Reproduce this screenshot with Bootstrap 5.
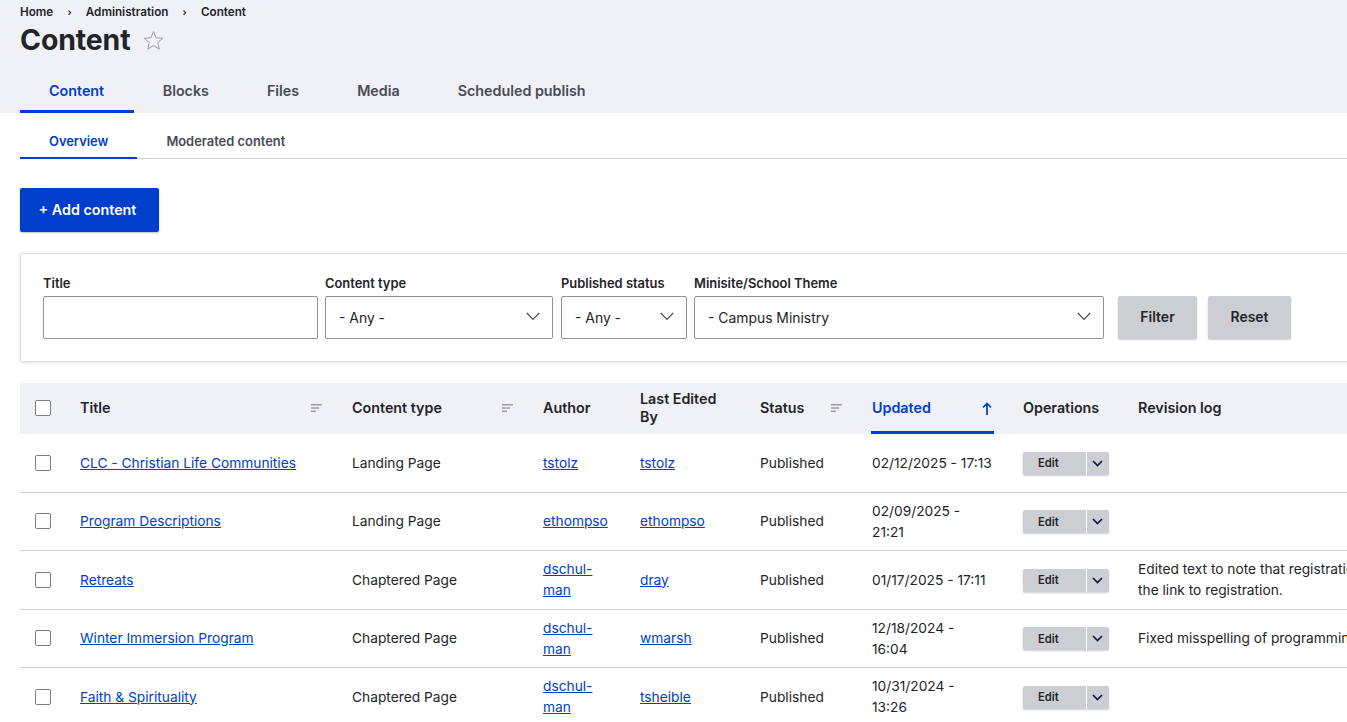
<!DOCTYPE html>
<html lang="en">
<head>
<meta charset="utf-8">
<title>Content</title>
<link href="https://cdn.jsdelivr.net/npm/bootstrap@5.3.0/dist/css/bootstrap.min.css" rel="stylesheet">
<style>
html, body { overflow: hidden; height: 722px; }
body { font-family: Inter, "Liberation Sans", sans-serif; font-size: 14px; line-height: 21px; color: #232429; background: #fff; -webkit-font-smoothing: antialiased; }
a { color: #003ecc; }
.page-head { background: #f0f1f6; padding: 0 20px; height: 113px; }
.crumbs { padding-top: 3px; height: 21px; font-size: 11.7px; line-height: 18px; font-weight: 600; margin: 0; }
.crumbs .breadcrumb-item { padding: 0; }
.crumbs .breadcrumb-item::before { display: none; }
.crumbs a { color: #232429; text-decoration: none; }
.crumbs .sep { width: 32.5px; text-align: center; font-size: 10px; }
.title-row { height: 36px; margin-top: 1px; }
.title-row h1 { font-size: 28.4px; line-height: 36px; font-weight: 700; margin: 0; letter-spacing: -.1px; }
.star { margin-left: 12px; margin-top: 1px; }
.tabs1 { margin-top: 12px; height: 43px; }
.tabs1 .nav-link { color: #484b55; font-weight: 600; font-size: 14.3px; line-height: 21px; padding: 10px 29px 9px; margin-right: 0; border: 0; border-bottom: 3px solid transparent; height: 43px; border-radius: 0; background: none; }
.tabs1 .nav-link.active { color: #003ecc; border-bottom-color: #003ecc; padding-right: 29.6px; }
.tabs2 { margin: 0 0 0 20px; height: 46px; border-bottom: 1px solid #cfd0d6; }
.tabs2 .nav-link { color: #484b55; font-weight: 600; font-size: 12.9px; line-height: 18px; padding: 19.6px 29px 6.4px; height: 46px; border: 0; border-bottom: 2px solid transparent; border-radius: 0; background: none; margin-bottom: -1px; }
.tabs2 .nav-link.active { color: #003ecc; border-bottom-color: #003ecc; }
.content { padding: 29px 20px 0; width: 1700px; }
.btn-add { background: #003ecc; color: #fff; font-weight: 600; font-size: 14.3px; height: 44px; width: 139px; padding: 0 4px 1px 0; border: 0; border-radius: 2px; box-shadow: 0 1px 2px rgba(0,0,0,.25); }
.btn-add:hover { background: #003ecc; color: #fff; }
.filters { margin-top: 21px; height: 109px; padding: 20.6px 22px 0; border: 1px solid #dedfe3; border-radius: 2px; box-shadow: 0 1px 4px rgba(0,0,0,.12); background: #fff; }
.filters label { display: block; font-size: 12.9px; line-height: 18px; font-weight: 600; margin-bottom: 3.4px; height: 18px; white-space: nowrap; }
.filters .form-control, .filters .form-select { height: 43px; border: 1px solid #8e929c; border-radius: 2px; font-size: 13.9px; line-height: 21px; color: #232429; padding: 2px 13px 0; background-image: none; box-shadow: none; }
.select-wrap { position: relative; }
.select-wrap svg { position: absolute; right: 13px; top: 16px; pointer-events: none; }
.f-title { width: 275px; margin-right: 7px; }
.f-type { width: 228px; margin-right: 8px; }
.f-pub { width: 126px; margin-right: 7px; }
.f-min { width: 410px; margin-right: 14px; }
.btn-grey { background: #cdced4; color: #232429; font-weight: 600; font-size: 14px; height: 43px; padding: 0 0 2px; border: 0; border-radius: 2px; box-shadow: 0 1px 2px rgba(0,0,0,.2); }
.btn-grey:hover { background: #cdced4; color: #232429; }
.btn-filter { width: 79px; margin-right: 11px; margin-top: 21.4px; }
.btn-reset { width: 83px; margin-top: 21.4px; }
.grid { margin-top: 21px; width: 1606px; table-layout: fixed; margin-bottom: 0; color: #232429; --bs-table-border-color: #cfd0d6; }
.grid thead th { background: #f0f1f6; height: 50.5px; padding: 0 12px 1px 12px; font-weight: 600; font-size: 14.3px; line-height: 18px; vertical-align: middle; border-bottom: 0; color: #232429; box-shadow: none; }
.grid tbody td { height: 58.5px; padding: 5px 12px 4px; vertical-align: middle; line-height: 21px; font-size: 13.75px; color: #232429; box-shadow: none; }
.grid thead th.check, .grid tbody td.check { padding: 0 0 0 15px; }
.grid .form-check-input { width: 16px; height: 16px; margin: 0; border: 1px solid #7a7d87; border-radius: 2px; display: block; }
.sorter { padding-right: 6px; }
.grid thead th.sorted { padding: 0 17px 0 11px; }
.sorted-in { height: 50.5px; border-bottom: 3px solid #003ecc; color: #003ecc; padding: 3px 2px 0 1px; }
.ops { width: 86px; height: 23px; border-radius: 2px; background: #cdced4; box-shadow: 0 1px 2px rgba(0,0,0,.2); }
.ops .edit { width: 63px; font-size: 11.2px; font-weight: 600; line-height: 22px; text-align: left; padding: 0 0 0 15px; border: 0; border-radius: 2px 0 0 2px; background: none; color: #232429; }
.ops .tog { width: 23px; border: 0; border-left: 1px solid #fff; padding: 0; background: none; border-radius: 0 2px 2px 0; }
.log { white-space: nowrap; }
</style>
</head>
<body>
<header class="page-head">
  <ol class="breadcrumb crumbs align-items-center">
    <li class="breadcrumb-item"><a href="#">Home</a></li>
    <li class="sep" aria-hidden="true">›</li>
    <li class="breadcrumb-item"><a href="#">Administration</a></li>
    <li class="sep" aria-hidden="true">›</li>
    <li class="breadcrumb-item"><a href="#">Content</a></li>
  </ol>
  <div class="title-row d-flex align-items-center">
    <h1>Content</h1>
    <svg class="star" width="21" height="21" viewBox="0 0 21 21" fill="none" stroke="#9a9da8" stroke-width="1"><path d="M10.5 1.6l2.6 6.2 6.7.5-5.1 4.3 1.6 6.5-5.8-3.5-5.8 3.5 1.6-6.5-5.1-4.3 6.7-.5z"/></svg>
  </div>
  <ul class="nav tabs1">
    <li class="nav-item"><a class="nav-link active" href="#">Content</a></li>
    <li class="nav-item"><a class="nav-link" href="#">Blocks</a></li>
    <li class="nav-item"><a class="nav-link" href="#">Files</a></li>
    <li class="nav-item"><a class="nav-link" href="#">Media</a></li>
    <li class="nav-item"><a class="nav-link" href="#">Scheduled publish</a></li>
  </ul>
</header>
<ul class="nav tabs2">
  <li class="nav-item"><a class="nav-link active" href="#">Overview</a></li>
  <li class="nav-item"><a class="nav-link" href="#">Moderated content</a></li>
</ul>
<main class="content">
  <a class="btn btn-add d-inline-flex align-items-center justify-content-center" href="#">+ Add content</a>
  <form class="filters d-flex align-items-start">
    <div class="f-title"><label for="t">Title</label><input id="t" class="form-control" type="text"></div>
    <div class="f-type"><label for="c">Content type</label><div class="select-wrap"><select id="c" class="form-select"><option>- Any -</option></select><svg width="14" height="9" viewBox="0 0 14 9" fill="none" stroke="#4a4d57" stroke-width="1.2"><path d="M.8 1l6.2 6.4L13.2 1"/></svg></div></div>
    <div class="f-pub"><label for="p">Published status</label><div class="select-wrap"><select id="p" class="form-select"><option>- Any -</option></select><svg width="14" height="9" viewBox="0 0 14 9" fill="none" stroke="#4a4d57" stroke-width="1.2"><path d="M.8 1l6.2 6.4L13.2 1"/></svg></div></div>
    <div class="f-min"><label for="m">Minisite/School Theme</label><div class="select-wrap"><select id="m" class="form-select"><option>- Campus Ministry</option></select><svg width="14" height="9" viewBox="0 0 14 9" fill="none" stroke="#4a4d57" stroke-width="1.2"><path d="M.8 1l6.2 6.4L13.2 1"/></svg></div></div>
    <button type="button" class="btn btn-grey btn-filter">Filter</button>
    <button type="button" class="btn btn-grey btn-reset">Reset</button>
  </form>
  <table class="table grid">
    <colgroup><col style="width:48px"><col style="width:272px"><col style="width:191px"><col style="width:97px"><col style="width:120px"><col style="width:112px"><col style="width:151px"><col style="width:115px"><col style="width:500px"></colgroup>
    <thead>
      <tr>
        <th class="check"><input class="form-check-input" type="checkbox" aria-label="Select all"></th>
        <th><div class="sorter d-flex justify-content-between align-items-center">Title <svg width="11" height="8" viewBox="0 0 11 8" fill="#9a9da8"><path d="M0 0h11v1.6H0zM0 3.2h8v1.6H0zM0 6.4h5V8H0z"/></svg></div></th>
        <th><div class="sorter d-flex justify-content-between align-items-center">Content type <svg width="11" height="8" viewBox="0 0 11 8" fill="#9a9da8"><path d="M0 0h11v1.6H0zM0 3.2h8v1.6H0zM0 6.4h5V8H0z"/></svg></div></th>
        <th>Author</th>
        <th>Last Edited<br>By</th>
        <th><div class="sorter d-flex justify-content-between align-items-center">Status <svg width="11" height="8" viewBox="0 0 11 8" fill="#9a9da8"><path d="M0 0h11v1.6H0zM0 3.2h8v1.6H0zM0 6.4h5V8H0z"/></svg></div></th>
        <th class="sorted"><div class="sorted-in d-flex justify-content-between align-items-center">Updated <svg width="10" height="13" viewBox="0 0 10 13" fill="none" stroke="#003ecc" stroke-width="1.7"><path d="M5 13V1.5M1 5.5l4-4 4 4"/></svg></div></th>
        <th>Operations</th>
        <th>Revision log</th>
      </tr>
    </thead>
    <tbody>
      <tr>
        <td class="check"><input class="form-check-input" type="checkbox" aria-label="Select"></td>
        <td><a href="#">CLC - Christian Life Communities</a></td><td>Landing Page</td><td><a href="#">tstolz</a></td><td><a href="#">tstolz</a></td><td>Published</td><td>02/12/2025 - 17:13</td>
        <td><div class="ops btn-group"><button type="button" class="edit btn">Edit</button><button type="button" class="tog btn d-flex align-items-center justify-content-center" aria-label="More"><svg width="11" height="7" viewBox="0 0 11 7" fill="none" stroke="#0f1b3d" stroke-width="1.7"><path d="M1 1l4.5 4.5L10 1"/></svg></button></div></td>
        <td></td>
      </tr>
      <tr>
        <td class="check"><input class="form-check-input" type="checkbox" aria-label="Select"></td>
        <td><a href="#">Program Descriptions</a></td><td>Landing Page</td><td><a href="#">ethompso</a></td><td><a href="#">ethompso</a></td><td>Published</td><td>02/09/2025 -<br>21:21</td>
        <td><div class="ops btn-group"><button type="button" class="edit btn">Edit</button><button type="button" class="tog btn d-flex align-items-center justify-content-center" aria-label="More"><svg width="11" height="7" viewBox="0 0 11 7" fill="none" stroke="#0f1b3d" stroke-width="1.7"><path d="M1 1l4.5 4.5L10 1"/></svg></button></div></td>
        <td></td>
      </tr>
      <tr>
        <td class="check"><input class="form-check-input" type="checkbox" aria-label="Select"></td>
        <td><a href="#">Retreats</a></td><td>Chaptered Page</td><td><a href="#">dschul-<br>man</a></td><td><a href="#">dray</a></td><td>Published</td><td>01/17/2025 - 17:11</td>
        <td><div class="ops btn-group"><button type="button" class="edit btn">Edit</button><button type="button" class="tog btn d-flex align-items-center justify-content-center" aria-label="More"><svg width="11" height="7" viewBox="0 0 11 7" fill="none" stroke="#0f1b3d" stroke-width="1.7"><path d="M1 1l4.5 4.5L10 1"/></svg></button></div></td>
        <td class="log">Edited text to note that registration<br>the link to registration.</td>
      </tr>
      <tr>
        <td class="check"><input class="form-check-input" type="checkbox" aria-label="Select"></td>
        <td><a href="#">Winter Immersion Program</a></td><td>Chaptered Page</td><td><a href="#">dschul-<br>man</a></td><td><a href="#">wmarsh</a></td><td>Published</td><td>12/18/2024 -<br>16:04</td>
        <td><div class="ops btn-group"><button type="button" class="edit btn">Edit</button><button type="button" class="tog btn d-flex align-items-center justify-content-center" aria-label="More"><svg width="11" height="7" viewBox="0 0 11 7" fill="none" stroke="#0f1b3d" stroke-width="1.7"><path d="M1 1l4.5 4.5L10 1"/></svg></button></div></td>
        <td class="log">Fixed misspelling of programming</td>
      </tr>
      <tr>
        <td class="check"><input class="form-check-input" type="checkbox" aria-label="Select"></td>
        <td><a href="#">Faith &amp; Spirituality</a></td><td>Chaptered Page</td><td><a href="#">dschul-<br>man</a></td><td><a href="#">tsheible</a></td><td>Published</td><td>10/31/2024 -<br>13:26</td>
        <td><div class="ops btn-group"><button type="button" class="edit btn">Edit</button><button type="button" class="tog btn d-flex align-items-center justify-content-center" aria-label="More"><svg width="11" height="7" viewBox="0 0 11 7" fill="none" stroke="#0f1b3d" stroke-width="1.7"><path d="M1 1l4.5 4.5L10 1"/></svg></button></div></td>
        <td></td>
      </tr>
    </tbody>
  </table>
</main>
<script src="https://cdn.jsdelivr.net/npm/bootstrap@5.3.0/dist/js/bootstrap.bundle.min.js"></script>
</body>
</html>
